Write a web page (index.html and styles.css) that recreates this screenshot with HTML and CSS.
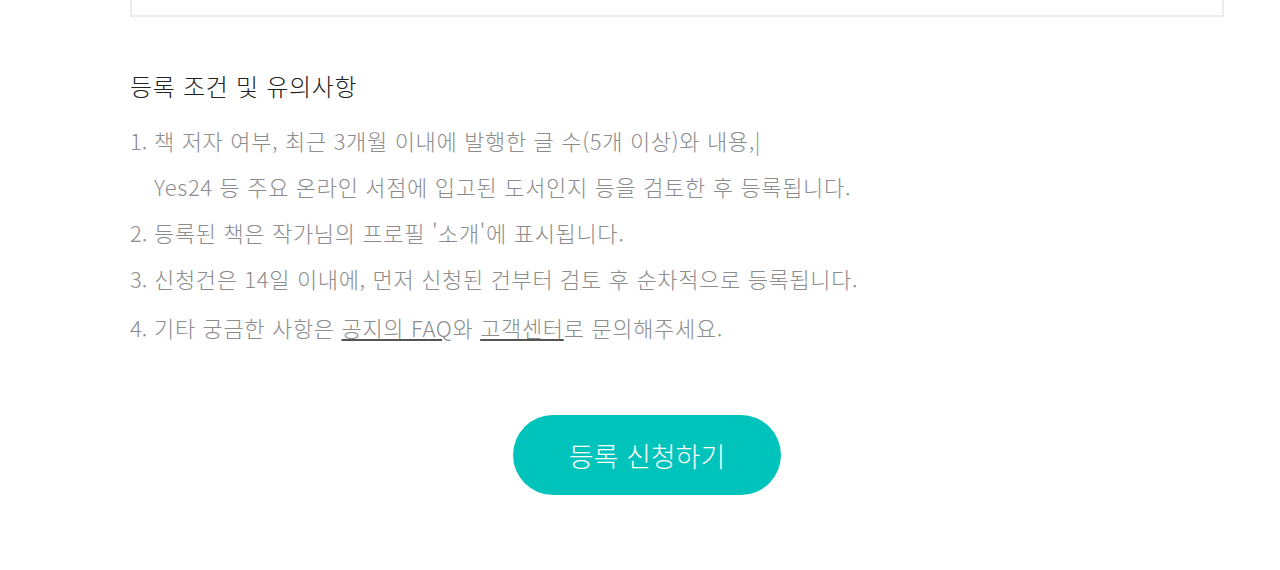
FILE: index.html
```html
<!DOCTYPE html>
<html lang="ko">
<head>
  <meta charset="UTF-8">
  <meta name="viewport" content="width=device-width, initial-scale=1.0">
  <title>작가 등록 신청</title>
  <link rel="stylesheet" href="styles.css">
</head>
<body>
  <div class="wrap">
    <div class="form-box"></div>

    <h3 class="notice-title">등록 조건 및 유의사항</h3>
    <ol class="notice-list">
      <li><span class="num">1.</span><span class="txt">책 저자 여부, 최근 3개월 이내에 발행한 글 수(5개 이상)와 내용,|<br>Yes24 등 주요 온라인 서점에 입고된 도서인지 등을 검토한 후 등록됩니다.</span></li>
      <li><span class="num">2.</span><span class="txt">등록된 책은 작가님의 프로필 '소개'에 표시됩니다.</span></li>
      <li><span class="num">3.</span><span class="txt">신청건은 14일 이내에, 먼저 신청된 건부터 검토 후 순차적으로 등록됩니다.</span></li>
      <li class="last"><span class="num">4.</span><span class="txt">기타 궁금한 사항은 <a href="#">공지의 FAQ</a>와 <a href="#">고객센터</a>로 문의해주세요.</span></li>
    </ol>

    <div class="btn-area">
      <button class="submit-btn">등록 신청하기</button>
    </div>
  </div>
</body>
</html>
```

FILE: styles.css
```css
* {
  margin: 0;
  padding: 0;
  box-sizing: border-box;
}

body {
  background-color: #fff;
  font-family: "Noto Sans CJK KR", "Noto Sans", sans-serif;
  font-weight: 300;
}

.wrap {
  width: 1094px;
  margin-left: 130px;
}

.form-box {
  height: 17px;
  border: 2px solid #ececec;
  border-top: none;
}

.notice-title {
  margin-top: 53px;
  font-size: 24px;
  font-weight: 300;
  letter-spacing: 0.7px;
  color: #222;
  line-height: 32px;
}

.notice-list {
  list-style: none;
  margin-top: 15px;
  font-size: 22px;
  letter-spacing: 0.65px;
  color: #8c8c8c;
  line-height: 46px;
}

.notice-list li {
  display: flex;
}

.notice-list .num {
  width: 24px;
  flex-shrink: 0;
  letter-spacing: 0;
}

.notice-list .last {
  margin-top: 3px;
}

.notice-list a {
  color: #8c8c8c;
  text-decoration: underline;
  text-decoration-color: #555;
}

.btn-area {
  display: flex;
  justify-content: center;
  padding-right: 60px;
  margin-top: 65px;
}

.submit-btn {
  width: 268px;
  height: 80px;
  border: none;
  border-radius: 40px;
  background-color: #00c4bc;
  color: #fff;
  font-family: inherit;
  font-size: 27px;
  font-weight: 300;
}
```
